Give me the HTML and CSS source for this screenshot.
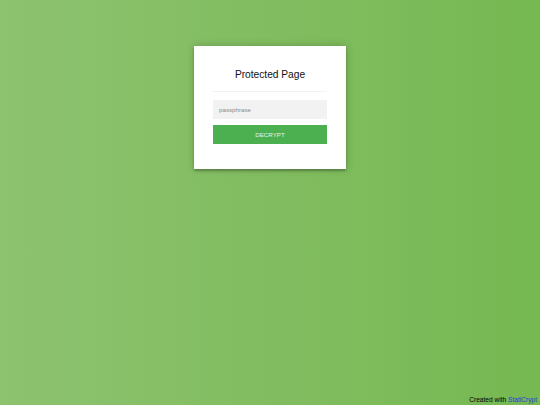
FILE: index.html
```html
<!DOCTYPE html>
<html lang="en">
<head>
<meta charset="utf-8">
<title>Protected Page</title>
<link rel="stylesheet" href="styles.css">
</head>
<body>
<main class="page">
  <div class="form">
    <h1 class="title">Protected Page</h1>
    <hr class="rule">
    <form class="fields">
      <input class="pass" type="password" placeholder="passphrase" autofocus>
      <button class="btn" type="button">Decrypt</button>
    </form>
  </div>
</main>
<footer class="footer">
  <p class="credit">Created with <a class="link" href="#">StatiCrypt</a></p>
</footer>
</body>
</html>
```
FILE: styles.css
```css
html, body {
  margin: 0;
  padding: 0;
}
body {
  min-height: 100vh;
  display: flex;
  flex-direction: column;
  background: linear-gradient(to left, #76b852, #8dc26f);
  font-family: "Liberation Sans", Arial, sans-serif;
}
.page {
  padding-top: 46px;
  flex: 1;
}
.form {
  width: 152px;
  box-sizing: border-box;
  margin: 0 auto;
  padding: 19px 19px 25px;
  background: #fff;
  text-align: center;
  box-shadow: 0 0 8px 0 rgba(0,0,0,0.2), 0 2px 2px 0 rgba(0,0,0,0.24);
}
.title {
  margin: 0;
  padding-top: 4px;
  font-size: 10.2px;
  line-height: 12px;
  font-weight: normal;
  color: #111;
}
.rule {
  margin: 10px 0 8px;
  border: 0;
  border-top: 1px solid #f2f2f2;
  height: 0;
}
.fields {
  display: flex;
  flex-direction: column;
  gap: 6px;
  margin: 0;
}
.pass {
  display: block;
  width: 100%;
  height: 19px;
  box-sizing: border-box;
  margin: 0;
  padding: 0 6px;
  border: 0;
  outline: 0;
  background: #f2f2f2;
  font-family: "Liberation Sans", Arial, sans-serif;
  font-size: 6.2px;
  color: #333;
  caret-color: #333;
}
.pass::placeholder {
  color: #8a8a8a;
}
.btn {
  display: block;
  width: 100%;
  height: 19px;
  margin: 0;
  padding: 0;
  border: 0;
  background: #4caf50;
  color: #e8f4e8;
  font-family: "Liberation Sans", Arial, sans-serif;
  font-size: 6.2px;
  text-transform: uppercase;
}
.footer {
  padding: 0 3px 1px;
  text-align: right;
}
.credit {
  margin: 0;
  font-size: 6.6px;
  line-height: 9px;
  color: #000;
}
.link {
  color: #1d3fcc;
  text-decoration: none;
}
```
